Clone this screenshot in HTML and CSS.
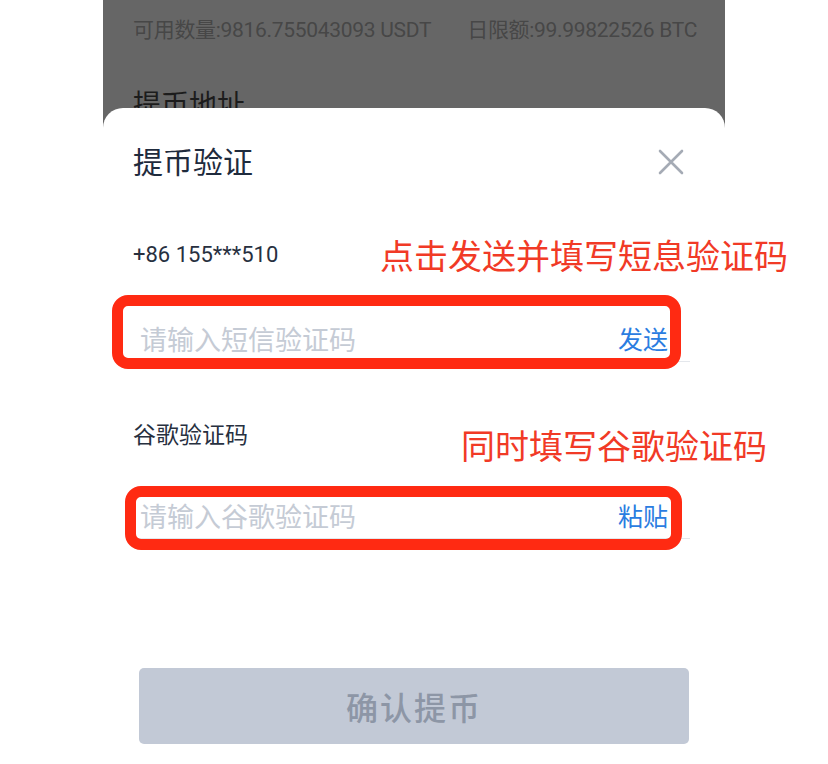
FILE: index.html
```html
<!DOCTYPE html>
<html>

<head>
    <title>提币验证</title>
    <meta charset="utf-8">
    <link rel="stylesheet" href="styles.css">
</head>

<body>
    <div id="tela">
        <!-- pagina de saque por baixo da janela -->
        <div class="fundo">
            <div class="limites">
                <span>可用数量:9816.755043093 USDT</span>
                <span>日限额:99.99822526 BTC</span>
            </div>
            <div class="rotulo-fundo">提币地址</div>
        </div>

        <div class="janela">
            <div class="cabecalho">
                <h2>提币验证</h2>
                <svg class="fechar" width="28" height="28" viewBox="0 0 28 28">
                    <path d="M3 3 L25 25 M25 3 L3 25" stroke="#a5abb5" stroke-width="2.6" stroke-linecap="round" fill="none" />
                </svg>
            </div>

            <div class="linha-texto">
                +86 155***510
                <span class="nota nota-sms">点击发送并填写短息验证码</span>
            </div>

            <div class="campo">
                <input type="text" placeholder="请输入短信验证码">
                <a class="acao">发送</a>
                <div class="marca marca-sms"></div>
            </div>

            <div class="linha-texto rotulo-google">
                谷歌验证码
                <span class="nota nota-google">同时填写谷歌验证码</span>
            </div>

            <div class="campo campo-google">
                <input type="text" placeholder="请输入谷歌验证码">
                <a class="acao">粘贴</a>
                <div class="marca marca-google"></div>
            </div>

            <button class="confirmar">确认提币</button>
        </div>
    </div>
</body>

</html>
```

FILE: styles.css
```css
body {
    margin: 0;
    background-color: #fff;
    font-family: Roboto, "Noto Sans CJK SC", sans-serif;
}

#tela {
    width: 622px;
    height: 764px;
    margin: 0 auto;
    display: flex;
    flex-direction: column;
    background-color: #666;
}

.fundo {
    height: 108px;
    overflow: hidden;
    padding: 0 30px;
}

.limites {
    display: flex;
    gap: 36px;
    padding-top: 15px;
    line-height: 30px;
    font-size: 21px;
    color: #474747;
    letter-spacing: -0.3px;
    white-space: nowrap;
}

.rotulo-fundo {
    margin-top: 44px;
    font-size: 28px;
    line-height: 34px;
    color: #1c1c1c;
}

.janela {
    flex: 1;
    background-color: #fff;
    border-radius: 20px 20px 0 0;
    padding: 0 30px;
}

.cabecalho {
    height: 104px;
    display: flex;
    align-items: center;
    justify-content: space-between;
}

.cabecalho h2 {
    margin: 0;
    font-size: 30px;
    font-weight: 400;
    color: #1f2b3d;
}

.fechar {
    margin: 4px 10px 0 0;
}

.linha-texto {
    position: relative;
    margin-top: 28px;
    line-height: 30px;
    font-size: 22px;
    color: #27303f;
}

.rotulo-google {
    margin-top: 59px;
    font-size: 23px;
}

/* anotacoes em vermelho por cima da tela */
.nota {
    position: absolute;
    white-space: nowrap;
    font-size: 34px;
    line-height: 40px;
    color: #f13a26;
}

.nota-sms {
    left: 247px;
    top: -3px;
}

.nota-google {
    left: 328px;
    top: 6px;
}

.campo {
    position: relative;
    height: 60px;
    margin: 32px 5px 0 0;
    display: flex;
    align-items: flex-end;
    padding: 0 22px 5px 7px;
    box-sizing: border-box;
    line-height: 30px;
    border-bottom: 1px solid #e4e7ec;
}

.campo-google {
    margin-top: 28px;
    padding-bottom: 5px;
}

.campo input {
    flex: 1;
    height: 30px;
    border: none;
    outline: none;
    padding: 0;
    font-family: inherit;
    font-size: 27px;
    color: #27303f;
    background: transparent;
}

.campo input::placeholder {
    color: #c5cbd5;
}

.acao {
    font-size: 25px;
    color: #2b7de1;
}

.marca {
    position: absolute;
    border: 11px solid #ff2a12;
    border-radius: 16px;
    pointer-events: none;
}

.marca-sms {
    left: -21px;
    right: 9px;
    top: -7px;
    bottom: -8px;
}

.marca-google {
    left: -8px;
    right: 8px;
    top: 7px;
    bottom: -12px;
}

.confirmar {
    display: block;
    width: calc(100% - 12px);
    height: 76px;
    margin: 129px 6px 0 6px;
    border: none;
    border-radius: 5px;
    background-color: #c2c9d6;
    font-family: inherit;
    font-size: 32px;
    font-weight: 500;
    color: #8d96a6;
    letter-spacing: 2px;
}
```
